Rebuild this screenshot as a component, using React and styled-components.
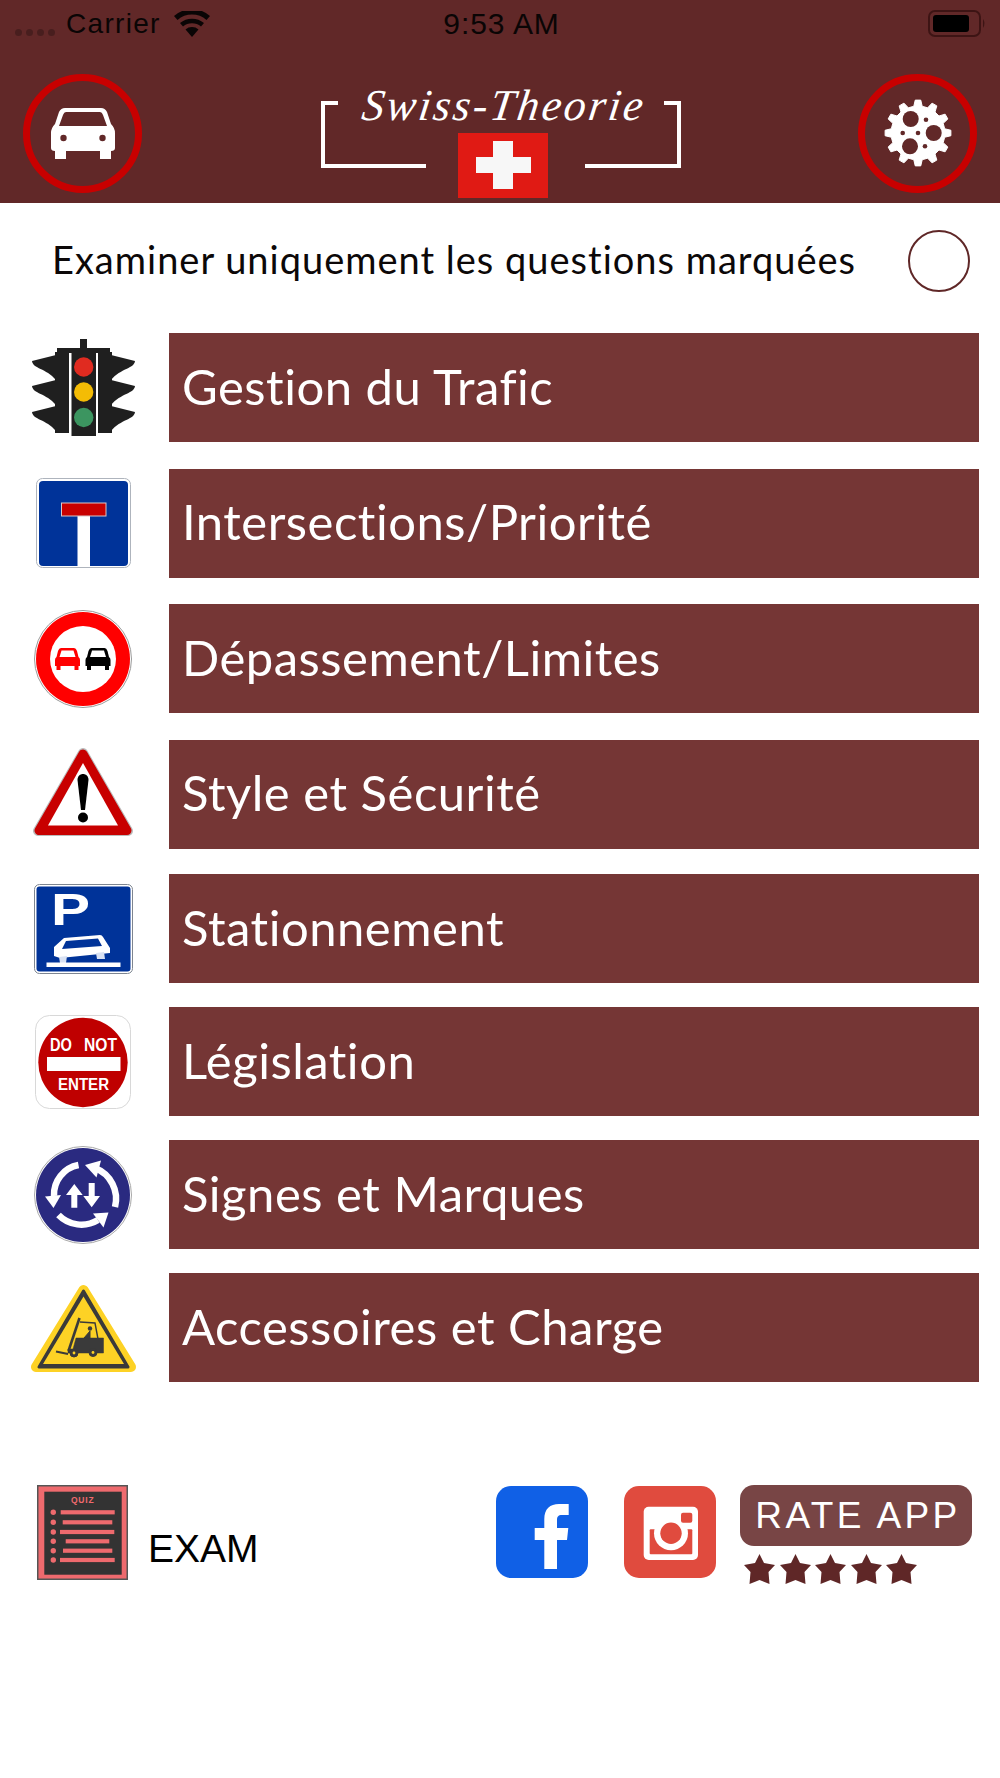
import React from 'react';
import styled, { createGlobalStyle } from 'styled-components';

const GlobalStyle = createGlobalStyle`
  html, body {
    margin: 0;
    padding: 0;
    background: #ffffff;
  }
  * { box-sizing: border-box; }
`;

const Page = styled.div`
  width: 1000px;
  min-height: 1778px;
  background: #ffffff;
  font-family: Lato, "Open Sans", sans-serif;
`;

const Top = styled.header`
  height: 203px;
  background: #612828;
`;

const StatusBar = styled.div`
  height: 47px;
  display: grid;
  grid-template-columns: 1fr auto 1fr;
  align-items: center;
  padding: 0 12px 0 15px;
  color: #0a0505;
  font-family: "Liberation Sans", Arial, sans-serif;
  font-size: 28px;
`;

const StatusLeft = styled.div`
  display: flex;
  align-items: center;
`;

const Dots = styled.div`
  display: flex;
  gap: 4px;
  margin: 18px 11px 0 0;
`;

const Dot = styled.span`
  width: 7px;
  height: 7px;
  border-radius: 50%;
  background: rgba(0, 0, 0, 0.25);
`;

const Carrier = styled.span`
  letter-spacing: 1.3px;
`;

const WifiIcon = styled.svg`
  margin-left: 13px;
`;

const Clock = styled.span`
  font-size: 30px;
  letter-spacing: 0.9px;
`;

const StatusRight = styled.div`
  display: flex;
  justify-content: flex-end;
`;

const NavBar = styled.div`
  display: flex;
  justify-content: space-between;
  align-items: flex-start;
  padding: 26.5px 23px 0;
`;

const RoundButton = styled.button`
  width: 119px;
  height: 119px;
  padding: 0;
  border: 7px solid #c80000;
  border-radius: 50%;
  background: transparent;
  display: flex;
  align-items: center;
  justify-content: center;
`;

const Logo = styled.div`
  position: relative;
  width: 360px;
  height: 113px;
  margin: 11.5px 0 0 2px;
  display: flex;
  flex-direction: column;
  align-items: center;
`;

const LogoFrame = styled.svg`
  position: absolute;
  left: 0;
  top: 16px;
`;

const LogoTitle = styled.div`
  height: 48px;
  margin-left: 5px;
  color: #ffffff;
  font-family: "Liberation Serif", "Times New Roman", serif;
  font-style: italic;
  font-size: 44px;
  line-height: 42px;
  letter-spacing: 2.6px;
  white-space: nowrap;
  transform: skewX(-8deg);
`;

const FlagIcon = styled.svg`
  display: block;
  margin-left: 4px;
`;

const MarkedRow = styled.div`
  display: flex;
  align-items: center;
  justify-content: space-between;
  padding: 27px 30px 41px 52px;
  color: #0c0808;
  font-size: 38px;
`;

const MarkedLabel = styled.span`
  margin-bottom: 4px;
  letter-spacing: 1px;
`;

const Radio = styled.span`
  width: 62px;
  height: 62px;
  border: 2.5px solid #5f2727;
  border-radius: 50%;
`;

const TopicList = styled.div`
  display: flex;
  flex-direction: column;
`;

const Topic = styled.div`
  display: flex;
  align-items: center;
  height: 109px;
  margin-top: ${(p) => p.$gap}px;
  padding-right: 21px;
`;

const TopicIcon = styled.div`
  width: 169px;
  flex: none;
  display: flex;
  justify-content: center;
  padding-right: 3px;
`;

const TopicBar = styled.div`
  flex: 1;
  height: 100%;
  display: flex;
  align-items: center;
  padding: 0 0 4px 13px;
  background: #753635;
  color: #ffffff;
  font-size: 49px;
  letter-spacing: 0.5px;
`;

const Footer = styled.footer`
  display: flex;
  justify-content: space-between;
  align-items: flex-start;
  margin-top: 103px;
  padding: 0 28px 0 37px;
`;

const ExamLink = styled.div`
  display: flex;
  align-items: flex-end;
  gap: 20px;
`;

const ExamLabel = styled.span`
  color: #000000;
  font-family: "Liberation Sans", Arial, sans-serif;
  font-size: 39px;
  line-height: 42px;
  margin-bottom: 10px;
`;

const Actions = styled.div`
  display: flex;
  align-items: flex-start;
`;

const SocialTile = styled.div`
  width: 92px;
  height: 92px;
  margin: 1px ${(p) => p.$after}px 0 0;
  border-radius: 15px;
  background: ${(p) => p.$color};
`;

const Rating = styled.div`
  display: flex;
  flex-direction: column;
`;

const RateButton = styled.div`
  width: 232px;
  height: 61px;
  padding-left: 4px;
  border-radius: 14px;
  background: #784545;
  color: #ffffff;
  font-family: "Liberation Sans", Arial, sans-serif;
  font-size: 37px;
  letter-spacing: 3.4px;
  line-height: 61px;
  text-align: center;
`;

const Stars = styled.div`
  display: flex;
  gap: 4.5px;
  margin: 8px 0 0 4px;
`;

const WIFI = (
  <WifiIcon width="36" height="26" viewBox="0 0 36 26">
    <path d="M18 26 L11.5 18.5 A10 10 0 0 1 24.5 18.5 Z" fill="#0a0505" />
    <path d="M9 15.5 A14 14 0 0 1 27 15.5 L30 12 A19 19 0 0 0 6 12 Z" fill="#0a0505" />
    <path d="M3.5 9 A22 22 0 0 1 32.5 9 L36 5 A27 27 0 0 0 0 5 Z" fill="#0a0505" />
  </WifiIcon>
);

const Battery = () => (
  <svg width="60" height="28" viewBox="0 0 60 28">
    <rect x="1" y="1" width="51" height="25" rx="6" fill="none" stroke="#3d1414" strokeWidth="2" />
    <rect x="5" y="5" width="36" height="17" rx="3" fill="#000" />
    <path d="M55 9 q3 4 0 9z" fill="#3d1414" />
  </svg>
);

const CarGlyph = () => (
  <svg width="64" height="51" viewBox="0 0 64 51">
    <path
      d="M14 0 H50 Q54 0 56 4 L60 16 Q64 20 64 25 V40 Q64 43 60 43 V51 H49 V43 H15 V51 H4 V43 Q0 43 0 40 V25 Q0 20 4 16 L8 4 Q10 0 14 0 Z"
      fill="#fff"
    />
    <path d="M15 4 H49 Q51 4 52 7 L56 18 H8 L12 7 Q13 4 15 4 Z" fill="#612828" />
    <circle cx="12.5" cy="30" r="3.2" fill="#612828" />
    <circle cx="51.5" cy="30" r="3.2" fill="#612828" />
  </svg>
);

// cog outline built from evenly spaced teeth
function cogPath(cx, cy, teeth, outer, inner) {
  const step = (Math.PI * 2) / teeth;
  let d = '';
  for (let i = 0; i < teeth; i++) {
    const a = i * step - Math.PI / 2;
    const pts = [
      [inner, a - step * 0.3],
      [outer, a - step * 0.16],
      [outer, a + step * 0.16],
      [inner, a + step * 0.3],
    ];
    pts.forEach(([r, t], j) => {
      const x = (cx + r * Math.cos(t)).toFixed(2);
      const y = (cy + r * Math.sin(t)).toFixed(2);
      d += `${i === 0 && j === 0 ? 'M' : 'L'}${x} ${y} `;
    });
  }
  return d + 'Z';
}

const COG_HOLES = [
  [-7.3, -14, 8], [15.7, 0, 8], [-8, 13.3, 8],
  [8, -13.3, 2.3], [-15.3, 0, 2.3], [0, 0, 2.3], [7, 13.3, 2.3],
];

const CogGlyph = () => (
  <svg width="68" height="68" viewBox="-34 -34 68 68">
    <path d={cogPath(0, 0, 12, 33, 27)} fill="#fff" strokeLinejoin="round" stroke="#fff" strokeWidth="1" />
    {COG_HOLES.map(([x, y, r]) => (
      <circle key={`${x}${y}`} cx={x} cy={y} r={r} fill="#612828" />
    ))}
  </svg>
);

const TrafficLight = () => {
  const wings = [16, 41, 67];
  return (
    <svg width="103" height="97" viewBox="0 0 103 97">
      <rect x="48" y="0" width="7" height="12" fill="#1f1f1f" />
      <rect x="25" y="9" width="53" height="5" fill="#1f1f1f" />
      <rect x="23" y="13" width="14" height="81" fill="#1f1f1f" />
      <rect x="66" y="13" width="14" height="81" fill="#1f1f1f" />
      {wings.map((y) => (
        <g key={y} fill="#1f1f1f">
          <path d={`M24 ${y} L0 ${y + 6} C1 ${y + 14} 14 ${y + 13} 24 ${y + 25} Z`} />
          <path d={`M79 ${y} L103 ${y + 6} C102 ${y + 14} 89 ${y + 13} 79 ${y + 25} Z`} />
        </g>
      ))}
      <rect x="39.5" y="13" width="24.5" height="84" fill="#1f1f1f" />
      <circle cx="51.7" cy="28" r="9.7" fill="#e02b20" />
      <circle cx="51.7" cy="53" r="9.7" fill="#f4bc05" />
      <circle cx="51.7" cy="78.5" r="9.7" fill="#3c9560" />
    </svg>
  );
};

const DeadEnd = () => (
  <svg width="95" height="90" viewBox="0 0 95 90">
    <rect x="0.5" y="0.5" width="94" height="89" rx="6" fill="#fff" stroke="#aeb4bd" />
    <rect x="3" y="3" width="89" height="85" rx="4" fill="#003399" />
    <rect x="41.5" y="36" width="12.5" height="52" fill="#fff" />
    <rect x="25.5" y="25" width="44.5" height="13" fill="#c80000" stroke="#d8c8c8" strokeWidth="1" />
  </svg>
);

const Car = ({ x, y, color }) => (
  <g transform={`translate(${x} ${y})`}>
    <path
      d="M6 0 H19 Q21 0 22 3 L23.5 9 Q25 10 25 12 V18 H23.5 V22 H19.5 V18 H5.5 V22 H1.5 V18 H0 V12 Q0 10 1.5 9 L3 3 Q4 0 6 0 Z"
      fill={color}
    />
    <path d="M6.5 2.5 H18.5 L20.5 9 H4.5 Z" fill="#fff" />
  </g>
);

const NoOvertaking = () => (
  <svg width="98" height="98" viewBox="0 0 98 98">
    <circle cx="49" cy="49" r="48.5" fill="#fff" stroke="#9a9a9a" />
    <circle cx="49" cy="49" r="47" fill="#ff0000" />
    <circle cx="49" cy="49" r="33" fill="#fff" />
    <Car x={21} y={38} color="#ff0000" />
    <Car x={51.5} y={38} color="#000" />
  </svg>
);

const Warning = () => (
  <svg width="100" height="94" viewBox="0 0 100 94">
    <path d="M50 6 L5 84 H95 Z" fill="#bbb" stroke="#bbb" strokeWidth="10" strokeLinejoin="round" />
    <path d="M50 7 L6 83.5 H94 Z" fill="#c80000" stroke="#c80000" strokeWidth="9" strokeLinejoin="round" />
    <path d="M50 16 L15 78.5 H85 Z" fill="#fff" />
    <path d="M44.5 33 C44.5 25 55.5 25 55.5 33 L52 63 H48 Z" fill="#000" />
    <circle cx="50" cy="70.5" r="5" fill="#000" />
  </svg>
);

const Parking = () => (
  <svg width="99" height="90" viewBox="0 0 99 90">
    <rect x="0.5" y="0.5" width="98" height="89" rx="5" fill="#fff" stroke="#7d8590" />
    <rect x="2.5" y="2.5" width="94" height="85" rx="3" fill="#003399" />
    <text
      x="17"
      y="41"
      fill="#fff"
      fontFamily="Liberation Sans, Arial, sans-serif"
      fontWeight="700"
      fontSize="45"
      textLength="39"
      lengthAdjust="spacingAndGlyphs"
    >
      P
    </text>
    <path d="M30 54 L66 51 Q68 51 69 53 L76 64 V69 L26 74 L20 72 V63 Z" fill="#fff" />
    <path d="M32 57 L64 54.5 L68 62 L28 65 Z" fill="#003399" />
    <path d="M25 73 L33 72 L32 79 H26 Z" fill="#d9e2f3" />
    <path d="M62 69 L70 68 L71 75 H63 Z" fill="#d9e2f3" />
    <rect x="12.5" y="78.5" width="74" height="4.5" fill="#fff" />
  </svg>
);

const DoNotEnter = () => (
  <svg width="96" height="94" viewBox="0 0 96 94">
    <rect x="0.5" y="0.5" width="95" height="93" rx="14" fill="#fff" stroke="#d8d8d8" />
    <circle cx="48" cy="47.5" r="44.7" fill="#bf0000" />
    <g fill="#fff" fontFamily="Liberation Sans, Arial, sans-serif" fontWeight="700">
      <text x="15" y="35.5" fontSize="17.5" textLength="22" lengthAdjust="spacingAndGlyphs">DO</text>
      <text x="49" y="35.5" fontSize="17.5" textLength="33" lengthAdjust="spacingAndGlyphs">NOT</text>
      <rect x="12" y="42" width="73.5" height="14" />
      <text x="23" y="74.5" fontSize="16" textLength="51" lengthAdjust="spacingAndGlyphs">ENTER</text>
    </g>
  </svg>
);

const Roundabout = () => (
  <svg width="98" height="98" viewBox="0 0 98 98">
    <circle cx="49" cy="49" r="48.5" fill="#fff" stroke="#a8a8a8" />
    <circle cx="49" cy="49" r="47" fill="#2a2a80" />
    <g fill="none" stroke="#fff" strokeWidth="6.5">
      <path d="M44.5 19 A30 30 0 0 0 20 50" />
      <path d="M81 61 A33 33 0 0 0 61 22" />
      <path d="M24.5 69 A32 32 0 0 0 64 74" />
    </g>
    <g fill="#fff">
      <path d="M11 50.5 L27 49 L19.5 62 Z" />
      <path d="M51 19 L67 14.5 L62.5 31.5 Z" />
      <path d="M74.5 66.5 L59 67.5 L69.5 81.5 Z" />
      <path d="M40.3 38 L48.7 49 H43.3 V61.7 H37.3 V49 H32 Z" />
      <path d="M57.7 61.3 L49.3 50 H54.7 V37 H60.7 V50 H66 Z" />
    </g>
  </svg>
);

const Forklift = () => (
  <svg width="107" height="90" viewBox="0 0 107 90">
    <path d="M53.5 7 L6 84 H101 Z" fill="#fdd225" stroke="#fdd225" strokeWidth="10" strokeLinejoin="round" />
    <path d="M53.5 8 L9 84 H98 Z" fill="#3a3a3a" stroke="#3a3a3a" strokeWidth="3" strokeLinejoin="round" />
    <path d="M53.5 13.5 L13 81 H94 Z" fill="#fdd225" />
    <g fill="#3a3a3a" stroke="#3a3a3a">
      <path d="M49.5 35 L38.5 68" strokeWidth="2.6" fill="none" />
      <path d="M26 68.5 L38 71" strokeWidth="2" fill="none" />
      <path d="M50 39 L65 40 L68 56" strokeWidth="1.4" fill="none" />
      <path d="M46 55 L43 66 H38 V70 H73.5 V55 Z" strokeWidth="0.5" />
      <circle cx="60" cy="45.5" r="2.2" strokeWidth="0" />
      <path d="M60 48 L54 55 H60 Z" strokeWidth="1" />
      <circle cx="44" cy="70" r="4" fill="#3a3a3a" />
      <circle cx="63" cy="69.5" r="4" fill="#3a3a3a" />
    </g>
    <circle cx="44" cy="70" r="1.4" fill="#fdd225" />
    <circle cx="63" cy="69.5" r="1.4" fill="#fdd225" />
  </svg>
);

const QUIZ_LINES = [
  [27.3, 23.7, 77.7], [37.3, 25.7, 75.3], [47, 23, 77.3],
  [56.3, 28.7, 72.3], [65.7, 26, 75.3], [75, 23, 77.7],
];

const QuizIcon = () => (
  <svg width="91" height="95" viewBox="0 0 91 95" style={{ display: 'block' }}>
    <rect x="0" y="0" width="91" height="95" fill="#555" />
    <rect x="1.5" y="1.5" width="88" height="92" fill="#ee6a6e" />
    <rect x="7.3" y="6.7" width="77.4" height="83" fill="#333" />
    <text
      x="45.7"
      y="18"
      fill="#ee6a6e"
      fontFamily="Liberation Sans, Arial, sans-serif"
      fontWeight="700"
      fontSize="8.5"
      textAnchor="middle"
      letterSpacing="0.8"
    >
      QUIZ
    </text>
    {QUIZ_LINES.map(([y, from, to]) => (
      <g key={y} fill="#ee6a6e">
        <circle cx="16.3" cy={y} r="2.7" />
        <rect x={from} y={y - 2.1} width={to - from} height="4.2" />
      </g>
    ))}
  </svg>
);

const FacebookGlyph = () => (
  <svg width="92" height="92" viewBox="0 0 92 92" style={{ display: 'block' }}>
    <path
      d="M48.3 83 V54 H38.7 V42 H48.3 V33 C48.3 23 54 18 63 18 H72.7 V29 H66 C62 29 61 31 61 34 V42 H72.3 L71 54 H61 V83 Z"
      fill="#fff"
    />
  </svg>
);

const InstagramGlyph = () => (
  <svg width="92" height="92" viewBox="0 0 92 92" style={{ display: 'block' }}>
    <rect x="19.7" y="20.7" width="54.3" height="53.3" rx="5" fill="#fff" />
    <rect x="25.7" y="43.3" width="42.6" height="25" rx="1" fill="#e04b3e" />
    <circle cx="47" cy="47.3" r="17" fill="#fff" />
    <circle cx="47" cy="47.3" r="10.7" fill="#e04b3e" />
    <rect x="57" y="26.7" width="11.3" height="10" rx="2" fill="#e04b3e" />
  </svg>
);

const Star = () => (
  <svg width="31" height="30" viewBox="0 0 31 30">
    <path d="M15.5 0 L20 9 L31 11 L24.5 18 L25.5 30 L15.5 26 L5.5 30 L6.5 18 L0 11 L11 9 Z" fill="#5f2727" />
  </svg>
);

const TOPICS = [
  { label: 'Gestion du Trafic', Icon: TrafficLight, gap: 0 },
  { label: 'Intersections/Priorité', Icon: DeadEnd, gap: 26.5 },
  { label: 'Dépassement/Limites', Icon: NoOvertaking, gap: 26.5 },
  { label: 'Style et Sécurité', Icon: Warning, gap: 26.5 },
  { label: 'Stationnement', Icon: Parking, gap: 25.5 },
  { label: 'Législation', Icon: DoNotEnter, gap: 24 },
  { label: 'Signes et Marques', Icon: Roundabout, gap: 24 },
  { label: 'Accessoires et Charge', Icon: Forklift, gap: 24 },
];

export default function App() {
  return (
    <Page>
      <GlobalStyle />
      <Top>
        <StatusBar>
          <StatusLeft>
            <Dots>
              <Dot /><Dot /><Dot /><Dot />
            </Dots>
            <Carrier>Carrier</Carrier>
            {WIFI}
          </StatusLeft>
          <Clock>9:53 AM</Clock>
          <StatusRight>
            <Battery />
          </StatusRight>
        </StatusBar>
        <NavBar>
          <RoundButton><CarGlyph /></RoundButton>
          <Logo>
            <LogoFrame width="360" height="70" viewBox="0 0 360 70">
              <path d="M17 2 H2 V65 H105" fill="none" stroke="#fff" strokeWidth="4" />
              <path d="M343 2 H358 V65 H264" fill="none" stroke="#fff" strokeWidth="4" />
            </LogoFrame>
            <LogoTitle>Swiss-Theorie</LogoTitle>
            <FlagIcon width="90" height="65" viewBox="0 0 90 65">
              <rect width="90" height="65" fill="#e01a14" />
              <rect x="18" y="24" width="55" height="16" fill="#f7f7f7" />
              <rect x="35" y="8" width="20" height="48" fill="#f7f7f7" />
            </FlagIcon>
          </Logo>
          <RoundButton><CogGlyph /></RoundButton>
        </NavBar>
      </Top>

      <MarkedRow>
        <MarkedLabel>Examiner uniquement les questions marquées</MarkedLabel>
        <Radio />
      </MarkedRow>

      <TopicList>
        {TOPICS.map(({ label, Icon, gap }) => (
          <Topic key={label} $gap={gap}>
            <TopicIcon><Icon /></TopicIcon>
            <TopicBar>{label}</TopicBar>
          </Topic>
        ))}
      </TopicList>

      <Footer>
        <ExamLink>
          <QuizIcon />
          <ExamLabel>EXAM</ExamLabel>
        </ExamLink>
        <Actions>
          <SocialTile $color="#1060e6" $after={36}><FacebookGlyph /></SocialTile>
          <SocialTile $color="#e04b3e" $after={24}><InstagramGlyph /></SocialTile>
          <Rating>
            <RateButton>RATE APP</RateButton>
            <Stars>
              {[1, 2, 3, 4, 5].map((n) => <Star key={n} />)}
            </Stars>
          </Rating>
        </Actions>
      </Footer>
    </Page>
  );
}
